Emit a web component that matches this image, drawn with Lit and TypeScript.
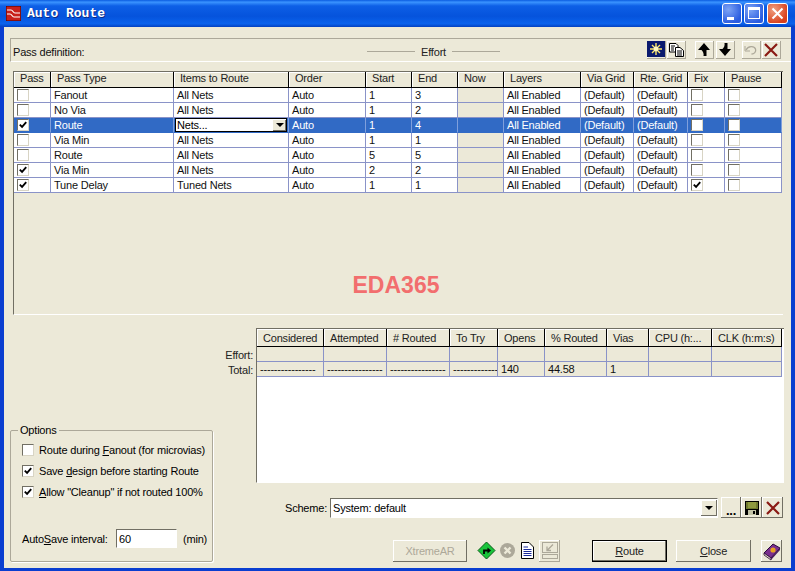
import { LitElement, html, css, svg } from "lit";
import { customElement } from "lit/decorators.js";

const COLS = [
  ["Pass", 37], ["Pass Type", 123], ["Items to Route", 115], ["Order", 77], ["Start", 46], ["End", 46],
  ["Now", 46], ["Layers", 77], ["Via Grid", 53], ["Rte. Grid", 54], ["Fix", 37], ["Pause", 57],
] as const;
const ROWS: [boolean, string, string, string, string, boolean][] = [
  [false, "Fanout", "All Nets", "1", "3", false],
  [false, "No Via", "All Nets", "1", "2", false],
  [true, "Route", "Nets...", "1", "4", false],
  [false, "Via Min", "All Nets", "1", "1", false],
  [false, "Route", "All Nets", "5", "5", false],
  [true, "Via Min", "All Nets", "2", "2", false],
  [true, "Tune Delay", "Tuned Nets", "1", "1", true],
];
const RES = [
  ["Considered", 67], ["Attempted", 63], ["# Routed", 63], ["To Try", 48], ["Opens", 47],
  ["% Routed", 62], ["Vias", 42], ["CPU (h:...", 63], ["CLK (h:m:s)", 70],
] as const;
const DASH = "----------------";
const TOTAL = [DASH, DASH, DASH, "-------------", "140", "44.58", "1", "", ""];

const check = svg`<path d="M3 6 L5.5 8.5 L10 3.5" fill="none" stroke="#000" stroke-width="2"/>`;
const icons: Record<string, unknown> = {
  star: svg`<rect width="18" height="16" fill="#0a1a6e"/><path d="M9 2V14M3 8H15M5 4L13 12M13 4L5 12" stroke="#ffe96a" stroke-width="1.4"/><circle cx="9" cy="8" r="2.4" fill="#fff8c0"/>`,
  copy: svg`<path d="M2.5 2.5H9L11 4.5V11H2.5Z" fill="#fff" stroke="#000"/><path d="M8.5 6.5H13L16.5 9.5V15.5H8.5Z" fill="#fff" stroke="#000"/><path d="M4 5H8M4 7H7M4 9H7M10 10H15M10 12H15M10 14H15" stroke="#000"/>`,
  up: svg`<path d="M9 2L15 9H11.5V15H8.5C9 12.5 8 10.5 6.5 9H3Z" fill="#000"/>`,
  down: svg`<path d="M9 15L15 8H11.5V2H8.5C9 4.5 8 6.5 6.5 8H3Z" fill="#000"/>`,
  undo: svg`<path d="M4 9C6 5 12 4.5 13.5 8C14.5 11 12 13 9.5 13" fill="none" stroke="#aca899" stroke-width="1.3"/><path d="M3 5V10H8" fill="none" stroke="#aca899" stroke-width="1"/>`,
  x: svg`<path d="M3 3L15 15M15 3L3 15" stroke="#8a1a14" stroke-width="2.2"/>`,
  save: svg`<path d="M2 2H16V16H2Z" fill="#000"/><rect x="3" y="3" width="12" height="7" fill="#6f7a2e"/><rect x="5" y="3" width="8" height="6" fill="#8f9a40"/><rect x="5" y="11" width="8" height="5" fill="#c4c4a8"/><rect x="10" y="12" width="2" height="3" fill="#000"/>`,
  go: svg`<path d="M9.5 1L18 9.5L9.5 18L1 9.5Z" fill="#19c43a" stroke="#0a5a18"/><path d="M7 13V9.5H11" fill="none" stroke="#000" stroke-width="1.8"/><path d="M10.5 6.5L14 9.5L10.5 12.5Z" fill="#000"/>`,
  stop: svg`<circle cx="9.5" cy="9.5" r="7.5" fill="#aca899"/><path d="M6.5 6.5L12.5 12.5M12.5 6.5L6.5 12.5" stroke="#ece9d8" stroke-width="2.4"/>`,
  doc: svg`<path d="M2.5 1.5H10L14.5 6V17.5H2.5Z" fill="#fff" stroke="#000"/><path d="M4.5 6H9M4.5 8.5H12.5M4.5 10.5H12.5M4.5 12.5H12.5M4.5 14.5H12.5" stroke="#1a2a9a"/>`,
  shrink: svg`<rect x="2.5" y="1.5" width="15" height="10" fill="none" stroke="#aca899"/><rect x="2.5" y="13.5" width="15" height="4" fill="none" stroke="#aca899"/><path d="M13 3.5L7.5 9M7 5.5V9.5H11" fill="none" stroke="#aca899" stroke-width="1.3"/>`,
  book: svg`<path d="M2 12L11 3L18 7L9 17Z" fill="#7a2e8e" stroke="#2a0a3a"/><path d="M2 12L9 17V19L2 14Z" fill="#e8d8c8" stroke="#2a0a3a" stroke-width=".8"/><circle cx="11" cy="9" r="2.6" fill="#e8a020"/><path d="M9 17L18 7V9L9 19Z" fill="#4a1a5e"/>`,
};

@customElement("app-root")
export class AppRoot extends LitElement {
  static styles = css`
    :host { display: block; width: 795px; height: 571px; overflow: hidden; font: 11px "Liberation Sans", Arial, sans-serif; letter-spacing: -0.2px; color: #000; }
    .win { width: 795px; height: 571px; display: flex; flex-direction: column; background: #0a3ed0; box-sizing: border-box; }
    .title { height: 27px; flex: none; display: flex; align-items: center; padding: 0 7px 0 6px; gap: 6px;
      background: linear-gradient(180deg, #0a5ce0 0%, #3a93ff 8%, #0d5fe6 22%, #0553dc 60%, #0a62ec 88%, #0340c0 100%); }
    .logo { width: 15px; height: 15px; flex: none; }
    .ttl { font: bold 13px "Liberation Mono", monospace; letter-spacing: 0; color: #fff; flex: 1; text-shadow: 1px 1px 0 #0a2a88; }
    .wbtns { display: flex; gap: 2px; }
    .wb { width: 20px; height: 21px; border: 1px solid #fff; border-radius: 3px; box-sizing: border-box; display: block;
      background: radial-gradient(circle at 30% 30%, #7da4f5, #2a5ce0 75%); }
    .wb.close { background: radial-gradient(circle at 30% 30%, #f0a080, #d8401c 75%); margin-left: 1px; width: 21px; }
    .wb svg { display: block; }
    .client { flex: 1; margin: 0 4px 3px 4px; background: #ece9d8; display: flex; flex-direction: column; padding: 11px 0 0 6px; min-height: 0; }
    .panel { height: 24px; box-sizing: border-box; flex: none; border-top: 1px solid #aca899; border-left: 1px solid #aca899; border-bottom: 1px solid #fff;
      display: grid; grid-template-columns: 354px 133px 1fr; align-items: center; padding-left: 2px; }
    .ptext { padding-top: 3px; color: #111; }
    .effort { display: flex; align-items: center; gap: 6px; color: #222; padding-top: 3px; }
    .effort i { flex: 1; height: 1px; background: #aca899; }
    .tools { display: flex; margin-left: 147px; height: 16px; align-items: center; }
    .tb { width: 19px; height: 18px; display: block; flex: none; box-shadow: inset -1px -1px 0 #aca899, inset 1px 1px 0 #fff; }
    .tb svg { display: block; }
    .tb.gap1 { margin-left: 1px; }
    .tb.gap2 { margin-left: 2px; }
    .tsep { width: 9px; flex: none; }
    .tsep2 { width: 7px; flex: none; }
    .table { margin: 9px 0 0 3px; height: 244px; flex: none; width: 770px; box-sizing: border-box; border-left: 1px solid #716f64; border-top: 1px solid #716f64; border-bottom: 1px solid #fff; }
    .grid { display: grid; }
    .h { height: 16px; box-sizing: border-box; padding: 0 0 0 6px; line-height: 13px; white-space: nowrap; overflow: hidden; color: #222;
      border-right: 1px solid #000; border-bottom: 1px solid #000; box-shadow: inset 1px 1px 0 #fff; background: #ece9d8; }
    .c { height: 15px; box-sizing: border-box; padding-left: 3px; line-height: 14px; white-space: nowrap; overflow: hidden; position: relative;
      border-right: 1px solid #8a93c8; border-bottom: 1px solid #8a93c8; background: #fff; color: #111; display: flex; align-items: center; }
    .c.sel { background: #316ac5; color: #fff; border-bottom-color: #316ac5; border-right-color: #7f9fdc; }
    .c.gray { background: #ece9d8; }
    .c.sel.gray { background: #316ac5; }
    .cb { width: 12px; height: 12px; box-sizing: border-box; background: #fff; border: 1px solid; border-color: #716f64 #d8d4c4 #d8d4c4 #716f64; display: block; flex: none; }
    .cb svg { display: block; margin: -1px 0 0 -1px; }
    .combo { position: absolute; inset: 0 1px 0 1px; border: 1px solid #000; background: #fff; color: #000; box-sizing: border-box; display: flex; align-items: center; padding-left: 1px; }
    .combo b { margin-left: auto; width: 13px; height: 11px; background: #ece9d8; box-shadow: inset -1px -1px 0 #716f64; display: flex; align-items: center; justify-content: center; }
    .arrow { width: 0; height: 0; border: 4px solid transparent; border-top: 4px solid #000; border-bottom: 0; display: block; }
    .wm { margin: 79px 0 0 0; text-align: center; width: 764px; font: bold 23px "Liberation Sans", Arial, sans-serif; letter-spacing: 0; color: #f26e6e; }
    .lower { margin-top: 13px; display: grid; grid-template-columns: 246px 528px; flex: 1; min-height: 0; }
    .left { display: flex; flex-direction: column; }
    .lbls { text-align: right; padding: 20px 3px 0 0; line-height: 15px; color: #222; }
    .opts { margin-top: auto; margin-bottom: 6px; width: 203px; height: 132px; box-sizing: border-box; border: 1px solid #aca899; box-shadow: 1px 1px 0 #fff; border-radius: 2px; position: relative; padding: 8px 0 0 11px; display: flex; flex-direction: column; white-space: nowrap; }
    .legend { position: absolute; top: -7px; left: 7px; background: #ece9d8; padding: 0 2px; }
    .opt { display: flex; align-items: center; gap: 5px; height: 21px; }
    .auto { display: flex; align-items: center; margin-top: auto; margin-bottom: 13px; }
    .auto .al { width: 94px; flex: none; }
    .in { width: 61px; height: 19px; box-sizing: border-box; background: #fff; border: 1px solid; border-color: #716f64 #fff #fff #716f64; margin-right: 6px; padding: 3px 0 0 2px; }
    .right { display: flex; flex-direction: column; }
    .res { height: 155px; flex: none; box-sizing: border-box; background: #fff; border-left: 1px solid #716f64; border-top: 1px solid #716f64; border-bottom: 1px solid #fff; }
    .res .h { height: 18px; padding: 2px 0 0 6px; line-height: 14px; }
    .res .c { background: #ece9d8; }
    .scheme { display: flex; align-items: center; margin-top: 14px; height: 21px; }
    .scheme .lab { margin-left: 29px; width: 45px; flex: none; }
    .sel-box { width: 388px; height: 20px; box-sizing: border-box; background: #fff; border: 1px solid; border-color: #716f64 #fff #fff #716f64; display: flex; align-items: center; padding-left: 2px; flex: none; }
    .sel-box b { margin-left: auto; width: 16px; height: 16px; background: #ece9d8; box-shadow: inset -1px -1px 0 #716f64, inset 1px 1px 0 #fff; display: flex; align-items: center; justify-content: center; }
    .sb { width: 21px; height: 21px; display: flex; flex: none; align-items: center; justify-content: center; box-shadow: inset -1px -1px 0 #716f64, inset 1px 1px 0 #fff; font-weight: bold; font-size: 13px; }
    .sb svg { display: block; }
    .sb.dots { margin-left: 3px; width: 20px; padding-top: 5px; box-sizing: border-box; }
    .btns { display: flex; align-items: center; margin-top: 21px; height: 23px; }
    .pb { height: 22px; width: 74px; box-sizing: border-box; display: flex; align-items: center; justify-content: center; flex: none; box-shadow: inset -1px -1px 0 #716f64, inset 1px 1px 0 #fff; color: #222; }
    .pb.dis { color: #aca899; margin-left: 137px; }
    .pb.def { width: 75px; border: 1px solid #000; margin-left: 32px; }
    .pb.cl { width: 75px; margin-left: 9px; }
    .ib { width: 21px; height: 22px; flex: none; display: flex; align-items: center; justify-content: center; }
    .ib.raised { box-shadow: inset -1px -1px 0 #aca899, inset 1px 1px 0 #fff; }
    .ib.first { margin-left: 9px; }
    .ib.book { margin-left: 10px; box-shadow: inset -1px -1px 0 #716f64, inset 1px 1px 0 #fff; }
  `;

  private ic(name: string, w = 18, h = 18) {
    return html`<svg width=${w} height=${h} viewBox="0 0 ${w} ${h}">${icons[name]}</svg>`;
  }
  private cb(on: boolean) {
    return html`<span class="cb">${on ? html`<svg width="12" height="12" viewBox="0 0 13 13">${check}</svg>` : ""}</span>`;
  }

  render() {
    const cols = COLS.map((c) => c[1] + "px").join(" ");
    const rcols = RES.map((c) => c[1] + "px").join(" ");
    return html`<div class="win">
      <div class="title">
        <svg class="logo" viewBox="0 0 15 15"><rect width="15" height="15" fill="#c8201c" stroke="#400" /><path d="M1 4H5C7 4 7 7 9 7H14M1 8H4C6 8 6 11 8 11H14" fill="none" stroke="#fff" stroke-width="1.2" /></svg>
        <span class="ttl">Auto Route</span>
        <div class="wbtns">
          <span class="wb"><svg width="18" height="19"><rect x="4" y="13" width="7" height="3" fill="#fff" /></svg></span>
          <span class="wb"><svg width="18" height="19"><rect x="3.5" y="4.5" width="11" height="10" fill="none" stroke="#fff" /><rect x="3" y="3" width="12" height="3" fill="#fff" /></svg></span>
          <span class="wb close"><svg width="19" height="19"><path d="M4.5 4.5L14.5 14.5M14.5 4.5L4.5 14.5" stroke="#fff" stroke-width="2" /></svg></span>
        </div>
      </div>
      <div class="client">
        <div class="panel">
          <span class="ptext">Pass definition:</span>
          <span class="effort"><i></i>Effort<i></i></span>
          <span class="tools">
            <span class="tb">${this.ic("star", 18, 16)}</span>
            <span class="tb gap1">${this.ic("copy")}</span>
            <span class="tsep"></span>
            <span class="tb">${this.ic("up")}</span>
            <span class="tb gap2">${this.ic("down")}</span>
            <span class="tsep2"></span>
            <span class="tb">${this.ic("undo")}</span>
            <span class="tb gap1">${this.ic("x")}</span>
          </span>
        </div>
        <div class="table">
          <div class="grid" style="grid-template-columns:${cols}">
            ${COLS.map((c) => html`<div class="h">${c[0]}</div>`)}
            ${ROWS.map((r, i) => {
              const s = i === 2 ? " sel" : "";
              return html`
                <div class="c${s}">${this.cb(r[0])}</div>
                <div class="c${s}">${r[1]}</div>
                <div class="c${s}">${i === 2 ? html`<span class="combo">${r[2]}<b><i class="arrow"></i></b></span>` : r[2]}</div>
                <div class="c${s}">Auto</div>
                <div class="c${s}">${r[3]}</div>
                <div class="c${s}">${r[4]}</div>
                <div class="c gray${s}"></div>
                <div class="c${s}">All Enabled</div>
                <div class="c${s}">(Default)</div>
                <div class="c${s}">(Default)</div>
                <div class="c${s}">${this.cb(r[5])}</div>
                <div class="c${s}">${this.cb(false)}</div>`;
            })}
          </div>
          <div class="wm">EDA365</div>
        </div>
        <div class="lower">
          <div class="left">
            <div class="lbls">Effort:<br />Total:</div>
            <div class="opts">
              <span class="legend">Options</span>
              <div class="opt">${this.cb(false)}<span>Route during <u>F</u>anout (for microvias)</span></div>
              <div class="opt">${this.cb(true)}<span>Save <u>d</u>esign before starting Route</span></div>
              <div class="opt">${this.cb(true)}<span><u>A</u>llow "Cleanup" if not routed 100%</span></div>
              <div class="auto"><span class="al">Auto<u>S</u>ave interval:</span><span class="in">60</span><span>(min)</span></div>
            </div>
          </div>
          <div class="right">
            <div class="res">
              <div class="grid" style="grid-template-columns:${rcols}">
                ${RES.map((c) => html`<div class="h">${c[0]}</div>`)}
                ${RES.map(() => html`<div class="c"></div>`)}
                ${TOTAL.map((t) => html`<div class="c">${t}</div>`)}
              </div>
            </div>
            <div class="scheme">
              <span class="lab">Scheme:</span>
              <div class="sel-box">System: default<b><i class="arrow"></i></b></div>
              <span class="sb dots">...</span>
              <span class="sb">${this.ic("save")}</span>
              <span class="sb">${this.ic("x")}</span>
            </div>
            <div class="btns">
              <span class="pb dis">XtremeAR</span>
              <span class="ib first">${this.ic("go", 19, 19)}</span>
              <span class="ib">${this.ic("stop", 19, 19)}</span>
              <span class="ib">${this.ic("doc", 19, 19)}</span>
              <span class="ib raised">${this.ic("shrink", 20, 19)}</span>
              <span class="pb def"><span><u>R</u>oute</span></span>
              <span class="pb cl"><span><u>C</u>lose</span></span>
              <span class="ib book">${this.ic("book", 20, 20)}</span>
            </div>
          </div>
        </div>
      </div>
    </div>`;
  }
}
